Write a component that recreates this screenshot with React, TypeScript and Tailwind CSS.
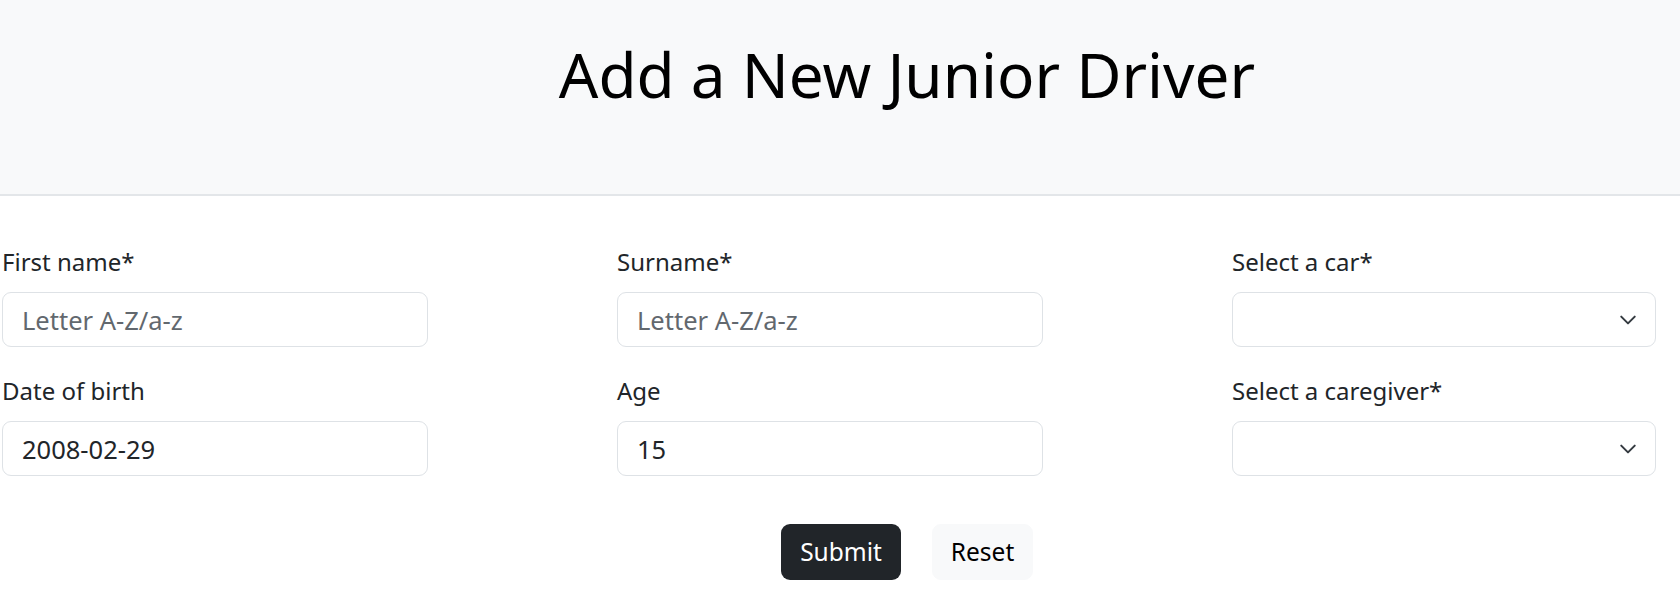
import { FC } from "react";

const font = { fontFamily: '"Noto Sans", "Open Sans", sans-serif' };

const Chevron: FC = () => (
  <svg
    className="pointer-events-none absolute right-[19px] top-1/2 -translate-y-1/2"
    width="18"
    height="18"
    viewBox="0 0 16 16"
    fill="none"
  >
    <path
      d="m2 5 6 6 6-6"
      stroke="#343a40"
      strokeWidth="1.8"
      strokeLinecap="round"
      strokeLinejoin="round"
    />
  </svg>
);

interface IFieldProps {
  label: string;
  placeholder?: string;
  value?: string;
  select?: boolean;
}

const Field: FC<IFieldProps> = ({ label, placeholder, value, select }) => {
  return (
    <div className="flex flex-col">
      <label className="mb-[12px] h-[36px] text-[24px] leading-[36px] text-[#212529]">{label}</label>
      {select ? (
        <div className="relative">
          <select
            className="h-[55px] w-full appearance-none rounded-[9px] border border-[#dee2e6] bg-white px-[20px] text-[25px] text-[#212529] outline-none"
            style={font}
            defaultValue=""
          >
            <option value=""></option>
          </select>
          <Chevron />
        </div>
      ) : (
        <input
          className="h-[55px] w-full rounded-[9px] border border-[#dee2e6] bg-white px-[19px] text-[25.5px] text-[#212529] outline-none placeholder:text-[#62686e]"
          style={font}
          placeholder={placeholder}
          defaultValue={value}
        />
      )}
    </div>
  );
};

export default function App() {
  return (
    <div className="min-h-[603px] w-full overflow-hidden bg-white text-[#212529]" style={font}>
      <header className="h-[196px] border-b-2 border-[#e3e6e9] bg-[#f8f9fa] pl-[134px] pt-[37px]">
        <h1 className="text-center text-[62px] font-normal leading-[1.2] text-black">
          Add a New Junior Driver
        </h1>
      </header>

      <form className="pl-[2px] pt-[48px]">
        <div className="grid grid-cols-[426px_426px_424px] gap-x-[189px] gap-y-[26px]">
          <Field label="First name*" placeholder="Letter A-Z/a-z" />
          <Field label="Surname*" placeholder="Letter A-Z/a-z" />
          <Field label="Select a car*" select />
          <Field label="Date of birth" value="2008-02-29" />
          <Field label="Age" value="15" />
          <Field label="Select a caregiver*" select />
        </div>

        <div className="flex justify-center gap-[31px] pl-[132px] pt-[48px]">
          <button
            type="submit"
            className="h-[56px] w-[120px] rounded-[9px] bg-[#212529] text-[24.5px] text-white"
          >
            Submit
          </button>
          <button
            type="reset"
            className="h-[56px] w-[101px] rounded-[9px] border border-[#f8f9fa] bg-[#f8f9fa] text-[24.5px] text-black"
          >
            Reset
          </button>
        </div>
      </form>
    </div>
  );
}
